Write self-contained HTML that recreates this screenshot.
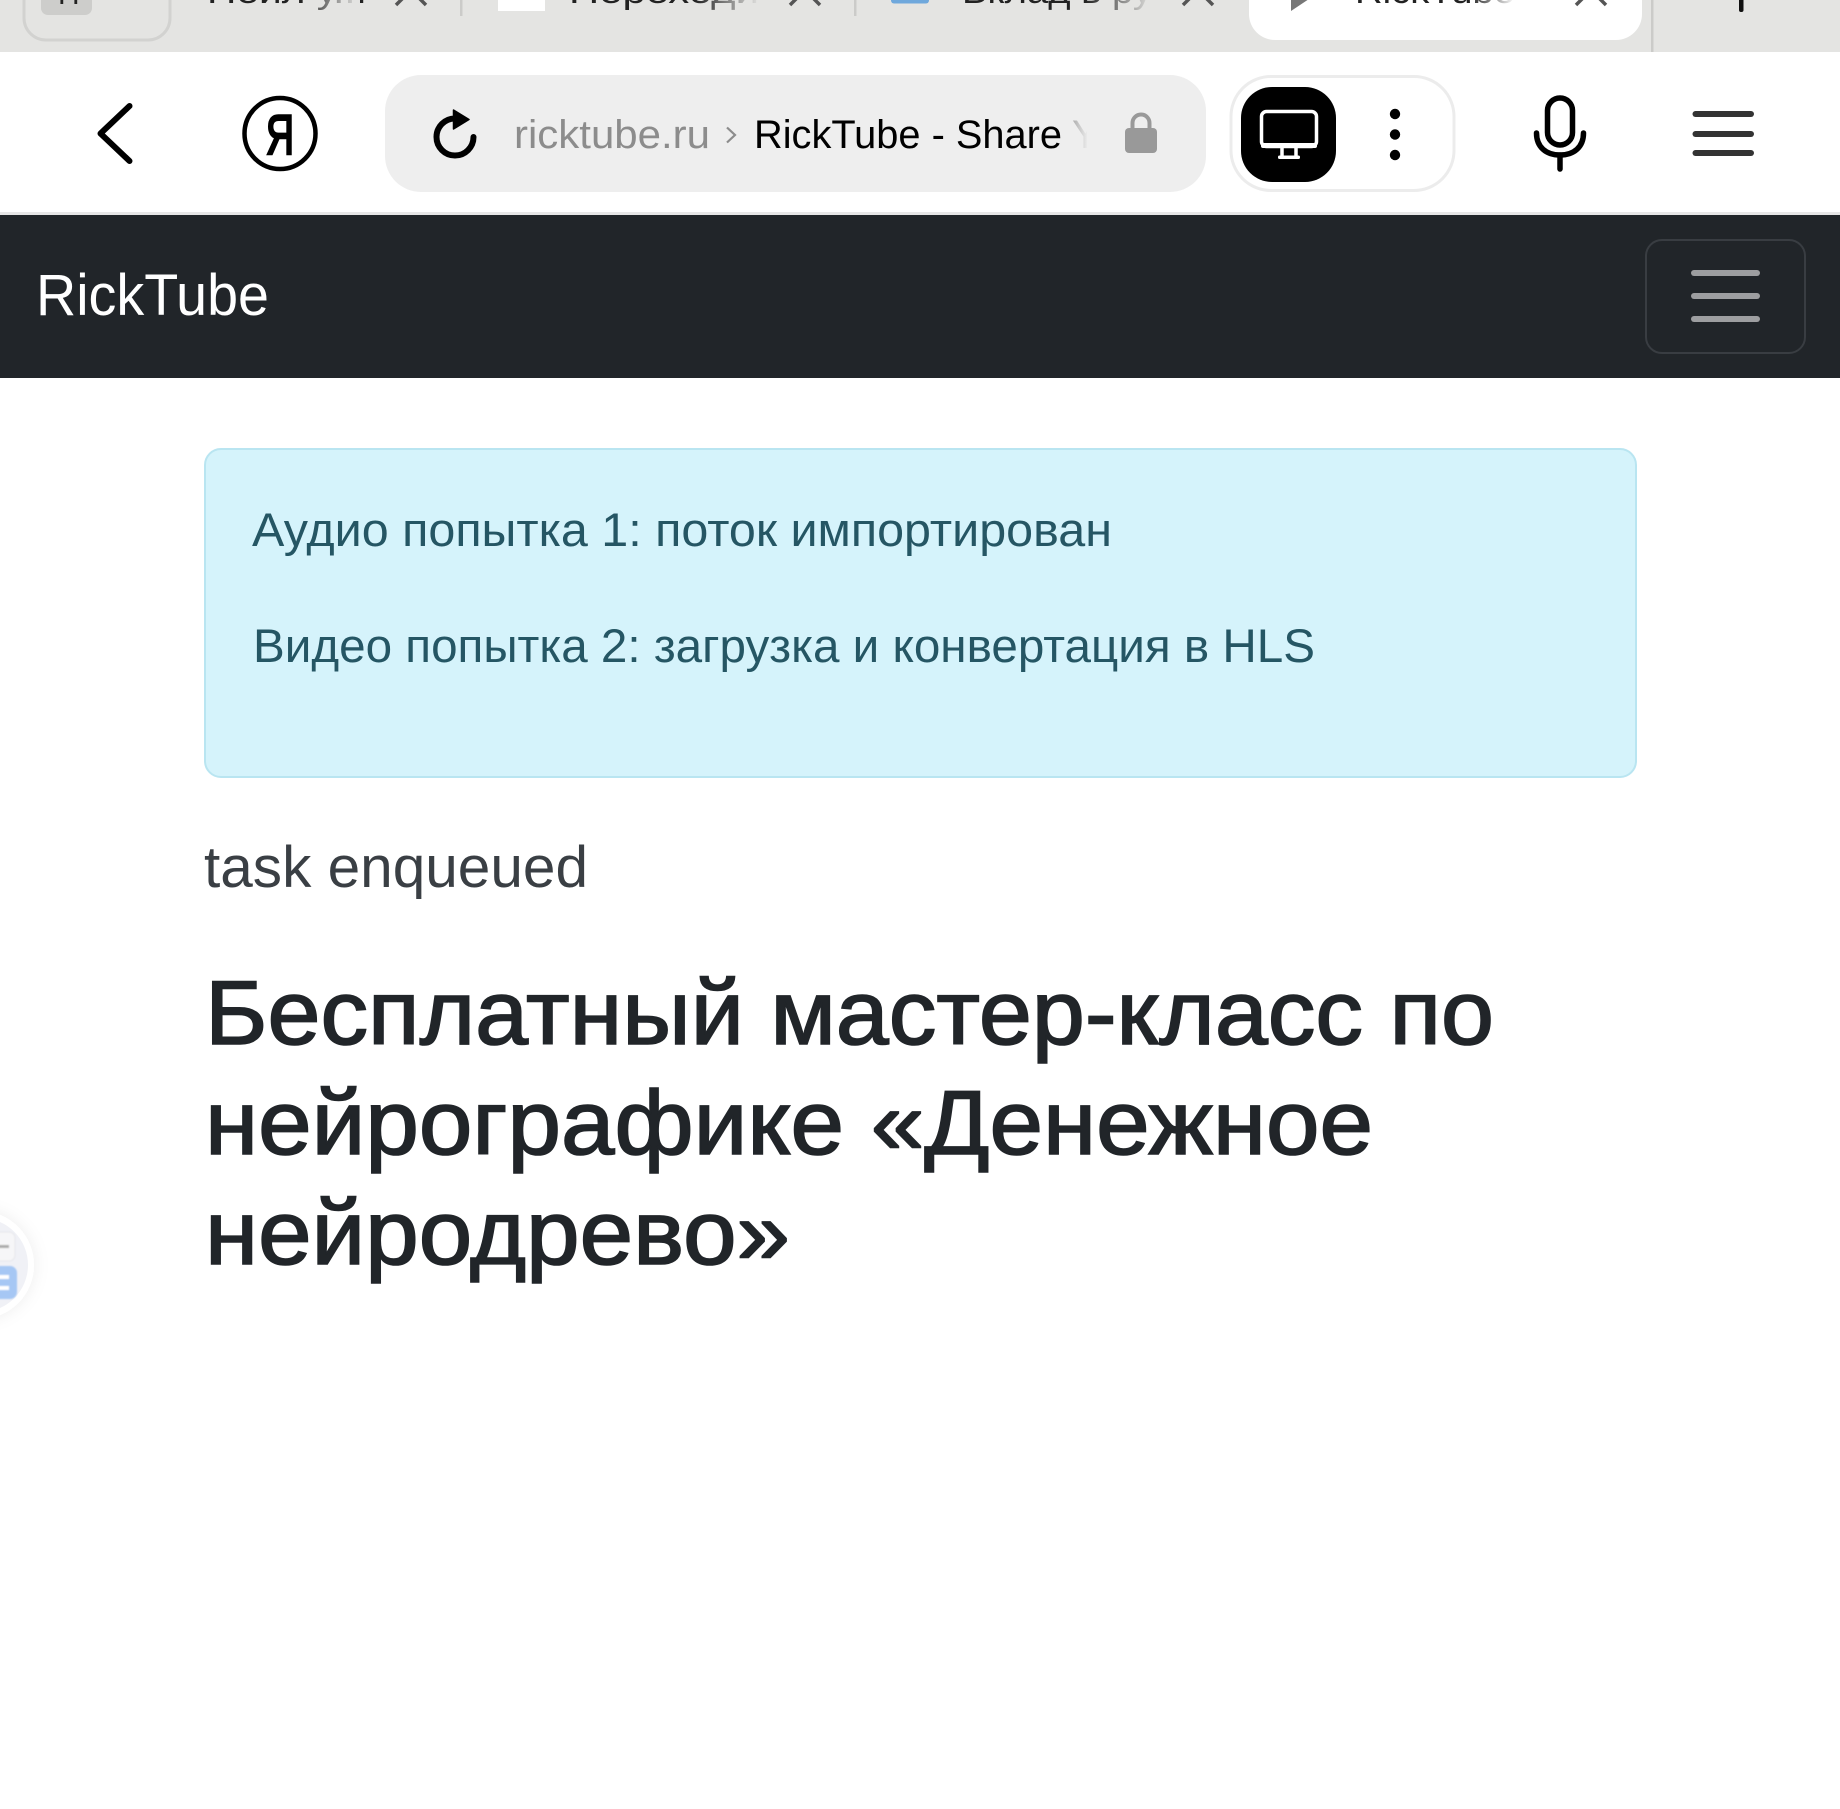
<!DOCTYPE html>
<html lang="ru">
<head>
<meta charset="utf-8">
<title>RickTube - Share Your Videos</title>
<style>
html,body{margin:0;padding:0;background:#fff;width:1840px;height:1809px;overflow:hidden}
svg{display:block;position:absolute;left:0;top:0}
text{font-family:"Liberation Sans","Noto Sans CJK SC",sans-serif}
</style>
</head>
<body>
<svg width="1840" height="1809" viewBox="0 0 1840 1809" xmlns="http://www.w3.org/2000/svg">
<defs>
<linearGradient id="fadeTab" x1="0" x2="1" y1="0" y2="0"><stop offset="0" stop-color="#e4e4e2" stop-opacity="0"/><stop offset="1" stop-color="#e4e4e2"/></linearGradient>
<linearGradient id="fadeW" x1="0" x2="1" y1="0" y2="0"><stop offset="0" stop-color="#fff" stop-opacity="0"/><stop offset="1" stop-color="#fff"/></linearGradient>
<linearGradient id="fadeUrl" x1="0" x2="1" y1="0" y2="0"><stop offset="0" stop-color="#eee" stop-opacity=".2"/><stop offset="1" stop-color="#eee"/></linearGradient>
<filter id="sh" x="-50%" y="-50%" width="200%" height="200%"><feDropShadow dx="0" dy="0" stdDeviation="8" flood-color="#000" flood-opacity=".07"/></filter>
<filter id="blur1"><feGaussianBlur stdDeviation=".8"/></filter>
</defs>

<!-- tab strip -->
<rect x="0" y="0" width="1840" height="52" fill="#e4e4e2"/>
<rect x="24" y="-40" width="146" height="80" rx="22" fill="none" stroke="#d2d2d0" stroke-width="3"/>
<rect x="41" y="-20" width="51" height="35" rx="7" fill="#cdcdcb"/>
<text x="58" y="4" font-size="30" fill="#222">П</text>

<text x="207" y="3" font-size="34" fill="#222" textLength="160" lengthAdjust="spacingAndGlyphs">Нейл у...</text>
<rect x="300" y="-2" width="60" height="16" fill="url(#fadeTab)"/>
<path d="M396 5L411 -10L426 5M396 -25L426 5M426 -25L396 5" stroke="#555" stroke-width="3.500" fill="none"/>
<rect x="460" y="0" width="2.500" height="16" fill="#cbcbc9"/>

<rect x="498" y="-20" width="47" height="31" fill="#fff"/>
<text x="569" y="3" font-size="34" fill="#222" textLength="190" lengthAdjust="spacingAndGlyphs">Переходи</text>
<rect x="695" y="-2" width="65" height="20" fill="url(#fadeTab)"/>
<path d="M790 5L805 -10L820 5M790 -25L820 5M820 -25L790 5" stroke="#555" stroke-width="3.500" fill="none"/>
<rect x="854" y="0" width="2.500" height="16" fill="#cbcbc9"/>

<rect x="891" y="-20" width="38" height="23.500" rx="3" fill="#6fa8dc"/>
<text x="962" y="3" font-size="34" fill="#222" textLength="190" lengthAdjust="spacingAndGlyphs">Вклад в ру</text>
<rect x="1085" y="-2" width="68" height="20" fill="url(#fadeTab)"/>
<path d="M1183 5L1198 -10L1213 5M1183 -25L1213 5M1213 -25L1183 5" stroke="#555" stroke-width="3.500" fill="none"/>

<rect x="1249" y="-40" width="393" height="80" rx="26" fill="#fff"/>
<path d="M1291 11L1309 -1L1291 -14Z" fill="#777"/>
<text x="1355" y="3" font-size="34" fill="#222" textLength="160" lengthAdjust="spacingAndGlyphs">RickTube</text>
<rect x="1470" y="-2" width="45" height="10" fill="url(#fadeW)"/>
<path d="M1576 5L1591 -10L1606 5M1576 -25L1606 5M1606 -25L1576 5" stroke="#555" stroke-width="3.500" fill="none"/>
<rect x="1651" y="0" width="2.500" height="52" fill="#cbcbc9"/>
<rect x="1739" y="-8" width="4.500" height="20" rx="2" fill="#111"/>

<!-- toolbar -->
<rect x="0" y="52" width="1840" height="161" fill="#fff"/>
<rect x="0" y="212" width="1840" height="3" fill="#e6e6e6"/>
<path d="M129.500 106L100.500 133.500L129.500 161" fill="none" stroke="#000" stroke-width="6" stroke-linecap="round" stroke-linejoin="round"/>
<circle cx="280" cy="133.500" r="35.500" fill="none" stroke="#000" stroke-width="4.500"/>
<text x="266" y="154" font-size="56" fill="#000" stroke="#000" stroke-width="2.600" textLength="28" lengthAdjust="spacingAndGlyphs">Я</text>

<rect x="385" y="75" width="821" height="117" rx="36" fill="#eeeeee"/>
<path d="M455 118.500A18.500 18.500 0 1 0 473.500 137" fill="none" stroke="#000" stroke-width="6" stroke-linecap="round"/>
<path d="M453.500 110L469 119.500L453.500 129Z" fill="#000" stroke="#000" stroke-width="1.500" stroke-linejoin="round"/>
<text x="514" y="148" font-size="40" fill="#8c8c8c" textLength="196" lengthAdjust="spacingAndGlyphs">ricktube.ru</text>
<path d="M727 127.500L735 135L727 142.500" fill="none" stroke="#8c8c8c" stroke-width="2.200"/>
<text x="754" y="148" font-size="40" fill="#000" textLength="308" lengthAdjust="spacingAndGlyphs">RickTube - Share</text>
<text x="1072" y="148" font-size="40" fill="#999">Y</text>
<rect x="1072" y="105" width="16" height="50" fill="url(#fadeUrl)"/>
<rect x="1087" y="105" width="24" height="50" fill="#eee"/>
<path d="M1132.500 130V123A8.500 8.500 0 0 1 1149.500 123V130" fill="none" stroke="#999" stroke-width="4"/>
<rect x="1125" y="128" width="32" height="25" rx="4" fill="#999"/>

<rect x="1231" y="76.500" width="223" height="114" rx="40" fill="#fff" stroke="#ececec" stroke-width="3"/>
<rect x="1241" y="87" width="95" height="95" rx="31" fill="#000"/>
<rect x="1261.500" y="111.500" width="55" height="35" rx="5" fill="#000" stroke="#fff" stroke-width="3.500"/>
<rect x="1261" y="143" width="56" height="5" rx="2" fill="#fff"/>
<path d="M1282 148V157M1296 148V157" stroke="#fff" stroke-width="3.500" fill="none"/>
<rect x="1278" y="155.500" width="22" height="3.500" rx="1.500" fill="#fff"/>
<circle cx="1395" cy="114" r="5.200" fill="#000"/><circle cx="1395" cy="134.500" r="5.200" fill="#000"/><circle cx="1395" cy="155" r="5.200" fill="#000"/>

<rect x="1547.500" y="98" width="25" height="47" rx="12.500" fill="none" stroke="#000" stroke-width="5.500"/>
<path d="M1536.500 133C1536.500 147 1546 155 1560 155C1574 155 1583.500 147 1583.500 133" fill="none" stroke="#000" stroke-width="5.500" stroke-linecap="round"/>
<path d="M1560 155V169" stroke="#000" stroke-width="5.500" stroke-linecap="round"/>

<rect x="1692.500" y="111" width="61.500" height="6" rx="3" fill="#333"/>
<rect x="1692.500" y="131" width="61.500" height="6" rx="3" fill="#333"/>
<rect x="1692.500" y="150" width="61.500" height="6" rx="3" fill="#333"/>

<!-- navbar -->
<rect x="0" y="215" width="1840" height="163" fill="#212529"/>
<text x="36" y="315" font-size="58" fill="#fff" textLength="233" lengthAdjust="spacingAndGlyphs">RickTube</text>
<rect x="1646" y="240" width="159" height="113" rx="16" fill="none" stroke="#393d42" stroke-width="2"/>
<rect x="1691" y="270" width="69" height="6" rx="3" fill="#9d9ea0"/>
<rect x="1691" y="293" width="69" height="6" rx="3" fill="#9d9ea0"/>
<rect x="1691" y="316" width="69" height="6" rx="3" fill="#9d9ea0"/>

<!-- alert -->
<rect x="205" y="449" width="1431" height="328" rx="16" fill="#d5f3fb" stroke="#b9e5f1" stroke-width="2"/>
<text x="252" y="546" font-size="47" fill="#255664" textLength="860" lengthAdjust="spacingAndGlyphs">Аудио попытка 1: поток импортирован</text>
<text x="253" y="662" font-size="47" fill="#255664" textLength="1062" lengthAdjust="spacingAndGlyphs">Видео попытка 2: загрузка и конвертация в HLS</text>

<!-- content -->
<text x="204" y="887" font-size="58" fill="#3a3f44" textLength="384" lengthAdjust="spacingAndGlyphs">task enqueued</text>
<g fill="#212529" stroke="#212529" stroke-width="1.600">
<text x="205" y="1044" font-size="91" textLength="1289" lengthAdjust="spacingAndGlyphs">Бесплатный мастер-класс по</text>
<text x="205" y="1154" font-size="91" textLength="1168" lengthAdjust="spacingAndGlyphs">нейрографике «Денежное</text>
<text x="205" y="1264" font-size="91" textLength="585" lengthAdjust="spacingAndGlyphs">нейродрево»</text>
</g>

<!-- floating widget -->
<circle cx="-20" cy="1265" r="54" fill="#fff" filter="url(#sh)"/>
<circle cx="-19" cy="1265" r="47" fill="#f0f1f6"/>
<g filter="url(#blur1)">
<rect x="-30" y="1232" width="45" height="29" rx="6" fill="#f6f6f8" stroke="#e6e6ea" stroke-width="1"/>
<rect x="-10" y="1245" width="19" height="3" fill="#aaa"/>
<rect x="-30" y="1266" width="47" height="33" rx="7" fill="#a6c7f4"/>
<rect x="-10" y="1275" width="19" height="4" fill="#fff"/>
<rect x="-10" y="1286" width="19" height="4" fill="#fff"/>
</g>
</svg>
</body>
</html>
